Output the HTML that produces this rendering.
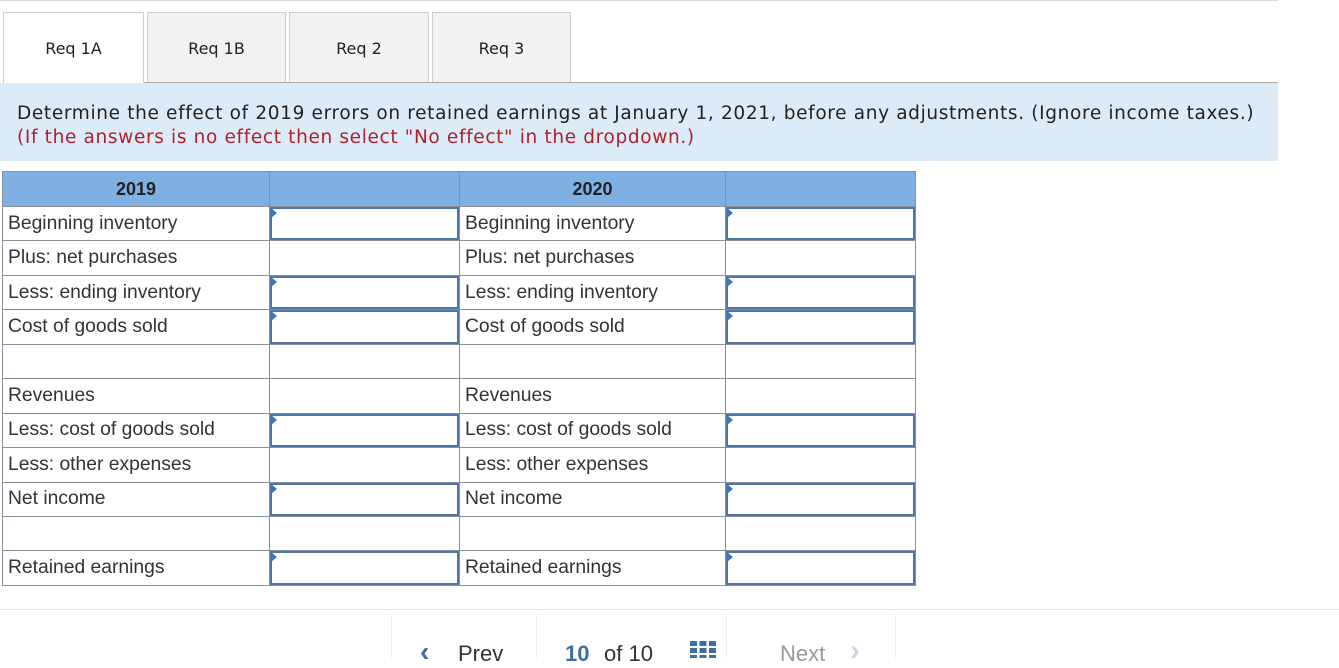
<!DOCTYPE html>
<html><head><style>
body{margin:0;width:1339px;height:658px;overflow:hidden;background:#fff;position:relative;font-family:"Liberation Sans",Arial,sans-serif}
.a{position:absolute}
.tab{position:absolute;top:12px;height:70px;background:#f2f2f2;border:1px solid #ccc;border-bottom:none;font-family:"DejaVu Sans",sans-serif;font-size:16px;color:#222;text-align:center;line-height:72px;box-sizing:border-box}
table{position:absolute;left:2px;top:171px;border-collapse:collapse;font-size:19.3px;color:#333;table-layout:fixed;width:914px}
td{border:1px solid #8a9099;height:34.45px;padding:0 0 0 5px;box-sizing:border-box;position:relative;white-space:nowrap}
th{background:#7fb0e3;border:1px solid #8a9099;height:35px;padding:0;box-sizing:border-box;font-size:18px;color:#222}
.in{position:absolute;left:0;top:0;right:0;bottom:0;border:2px solid #4f76a6}
.in:before{content:"";position:absolute;left:-1px;top:-1px;border-left:6px solid #3d77b8;border-top:5px solid transparent;border-bottom:5px solid transparent}
</style></head><body>
<div class="a" style="left:0;top:0;width:1278px;height:1px;background:#ddd"></div>
<div class="tab" style="left:3px;width:141px;background:#fff;height:71px">Req 1A</div>
<div class="tab" style="left:147px;width:139px">Req 1B</div>
<div class="tab" style="left:289px;width:140px">Req 2</div>
<div class="tab" style="left:432px;width:139px">Req 3</div>
<div class="a" style="left:144px;top:82px;width:1134px;height:1px;background:#aaa"></div>
<div class="a" style="left:0;top:83px;width:1278px;height:78px;background:#dbebf8;font-family:'DejaVu Sans',sans-serif;font-size:18.5px;letter-spacing:0.65px;line-height:24px;padding:19px 0 0 17px;box-sizing:border-box;color:#222;white-space:nowrap">Determine the effect of 2019 errors on retained earnings at January 1, 2021, before any adjustments. (Ignore income taxes.)<br><span style="color:#b0202a">(If the answers is no effect then select "No effect" in the dropdown.)</span></div>
<table>
<colgroup><col style="width:267px"><col style="width:190px"><col style="width:266px"><col style="width:190px"></colgroup>
<tr><th>2019</th><th></th><th>2020</th><th></th></tr>
<tr><td>Beginning inventory</td><td><div class="in"></div></td><td>Beginning inventory</td><td><div class="in"></div></td></tr>
<tr><td>Plus: net purchases</td><td></td><td>Plus: net purchases</td><td></td></tr>
<tr><td>Less: ending inventory</td><td><div class="in"></div></td><td>Less: ending inventory</td><td><div class="in"></div></td></tr>
<tr><td>Cost of goods sold</td><td><div class="in"></div></td><td>Cost of goods sold</td><td><div class="in"></div></td></tr>
<tr><td></td><td></td><td></td><td></td></tr>
<tr><td>Revenues</td><td></td><td>Revenues</td><td></td></tr>
<tr><td>Less: cost of goods sold</td><td><div class="in"></div></td><td>Less: cost of goods sold</td><td><div class="in"></div></td></tr>
<tr><td>Less: other expenses</td><td></td><td>Less: other expenses</td><td></td></tr>
<tr><td>Net income</td><td><div class="in"></div></td><td>Net income</td><td><div class="in"></div></td></tr>
<tr><td></td><td></td><td></td><td></td></tr>
<tr><td>Retained earnings</td><td><div class="in"></div></td><td>Retained earnings</td><td><div class="in"></div></td></tr>
</table>
<div class="a" style="left:0;top:609px;width:1339px;height:1px;background:#e8e8e8"></div>
<div class="a" style="left:391px;top:615px;width:1px;height:43px;background:#eee"></div>
<div class="a" style="left:536px;top:615px;width:1px;height:43px;background:#eee"></div>
<div class="a" style="left:726px;top:615px;width:1px;height:43px;background:#eee"></div>
<div class="a" style="left:895px;top:615px;width:1px;height:43px;background:#eee"></div>
<div class="a" style="left:420px;top:636px;font-size:28px;color:#3c6ea8;font-weight:bold">‹</div>
<div class="a" style="left:458px;top:641px;font-size:22px;color:#333">Prev</div>
<div class="a" style="left:565px;top:641px;font-size:22px;color:#3c6ea8;font-weight:bold">10</div>
<div class="a" style="left:604px;top:641px;font-size:22px;color:#333">of 10</div>
<div class="a" style="left:690px;top:641px;width:26px;height:17px;background:repeating-linear-gradient(90deg,#3c6ea8 0 7px,transparent 7px 9.5px)"></div>
<div class="a" style="left:690px;top:646px;width:26px;height:2px;background:#fff"></div>
<div class="a" style="left:690px;top:653px;width:26px;height:2px;background:#fff"></div>
<div class="a" style="left:780px;top:641px;font-size:22px;color:#999">Next</div>
<div class="a" style="left:850px;top:634px;font-size:30px;color:#c8d6e5;font-weight:bold">›</div>
</body></html>
